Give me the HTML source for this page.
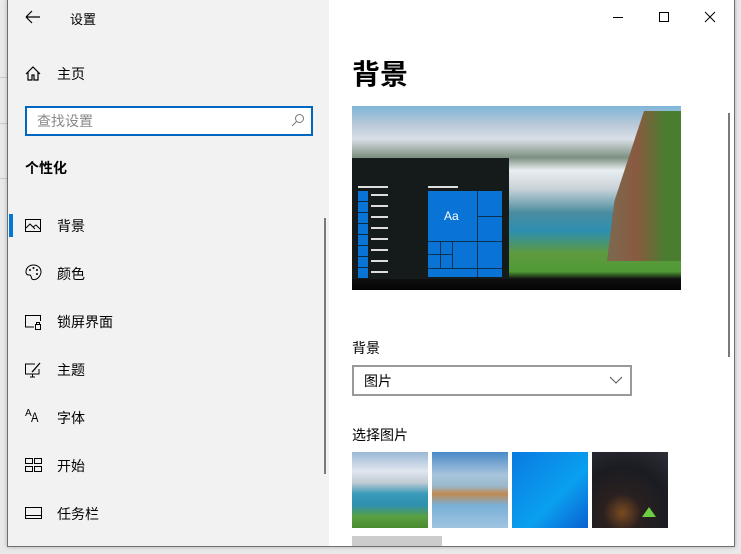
<!DOCTYPE html>
<html><head><meta charset="utf-8"><style>
*{margin:0;padding:0;box-sizing:border-box}
body{width:741px;height:554px;background:#e9e9e9;position:relative;overflow:hidden;font-family:"Liberation Sans","Noto Sans CJK SC",sans-serif;color:#000}
.win{position:absolute;left:7px;top:-1px;width:728px;height:548px;border:1px solid #6f6f6f;background:#fff;overflow:hidden;box-shadow:0 0 4px rgba(0,0,0,.25)}
.left{position:absolute;left:0;top:0;width:321px;height:548px;background:#f2f2f2}
.t{position:absolute;font-size:14px;white-space:nowrap}
.ic{position:absolute}
.img{position:absolute;overflow:hidden}
</style></head><body>
<div style="position:absolute;left:0;top:77px;width:7px;height:1px;background:#ccc"></div>
<div style="position:absolute;left:0;top:123px;width:7px;height:1px;background:#ccc"></div>
<div style="position:absolute;left:0;top:178px;width:7px;height:1px;background:#ccc"></div>
<div class="win">
<div class="left">
 <svg class="ic" style="left:17px;top:10px" width="16" height="14"><path d="M1 7H15M1 7L7 1M1 7L7 13" stroke="#000" fill="none" stroke-width="1.2"/></svg>
 <div class="t" style="left:62px;top:9px;font-size:13px">设置</div>
 <svg class="ic" style="left:17px;top:66px" width="16" height="15"><path d="M1 8L8 1L15 8M3 6V14H7V9H9V14H13V6" stroke="#000" fill="none" stroke-width="1.2"/></svg>
 <div class="t" style="left:49px;top:64px">主页</div>
 <div style="position:absolute;left:17px;top:106px;width:288px;height:30px;border:2px solid #0067c0;background:#fff"></div>
 <div class="t" style="left:29px;top:111px;color:#888">查找设置</div>
 <svg class="ic" style="left:283px;top:113px" width="14" height="14"><circle cx="8.5" cy="5.5" r="4" stroke="#777" fill="none"/><path d="M5.5 8.5L1 13" stroke="#777"/></svg>
 <div class="t" style="left:17px;top:158px;font-weight:bold">个性化</div>
 <div style="position:absolute;left:1px;top:214px;width:4px;height:23px;background:#0078d7"></div>
 <svg class="ic" style="left:17px;top:219px" width="16" height="13"><rect x=".5" y=".5" width="15" height="12" stroke="#000" fill="none"/><path d="M1 9L5 5L10 10M8 8L11 6L15 10" stroke="#000" fill="none"/></svg>
 <div class="t" style="left:49px;top:216px">背景</div>
 <svg class="ic" style="left:17px;top:264px" width="17" height="17"><path d="M8.5 1C4 1 1 4 1 8C1 11 3 11 5 11C6 11 6 13 7 15C8 16 11 16 13 14C15 12 16 10 16 8C16 4 13 1 8.5 1Z" stroke="#000" fill="none"/><circle cx="5" cy="6" r="1"/><circle cx="8.5" cy="4" r="1"/><circle cx="12" cy="6" r="1"/><circle cx="12" cy="10" r="1"/></svg>
 <div class="t" style="left:49px;top:264px">颜色</div>
 <svg class="ic" style="left:17px;top:315px" width="17" height="15"><path d="M9 12H.5V.5H15.5V6" stroke="#000" fill="none"/><rect x="10.5" y="9.5" width="5" height="5" stroke="#000" fill="none"/><path d="M11.5 9.5V7.5H14.5V9.5" stroke="#000" fill="none"/></svg>
 <div class="t" style="left:49px;top:312px">锁屏界面</div>
 <svg class="ic" style="left:17px;top:362px" width="17" height="16"><path d="M10 2H.5V12H14V7M5 15H10M7.5 12V15" stroke="#000" fill="none"/><path d="M15 1L8 9L7 10" stroke="#000" fill="none" stroke-width="1.3"/></svg>
 <div class="t" style="left:49px;top:360px">主题</div>
 <div class="t" style="left:17px;top:409px;font-size:10px;line-height:10px">A</div>
 <div class="t" style="left:23px;top:410px;font-size:14px;line-height:14px;transform:scaleX(.8);transform-origin:left">A</div>
 <div class="t" style="left:49px;top:408px">字体</div>
 <svg class="ic" style="left:17px;top:458px" width="17" height="14"><rect x=".5" y=".5" width="7" height="5" stroke="#000" fill="none"/><rect x="9.5" y=".5" width="7" height="5" stroke="#000" fill="none"/><rect x=".5" y="8.5" width="7" height="5" stroke="#000" fill="none"/><rect x="9.5" y="8.5" width="7" height="5" stroke="#000" fill="none"/></svg>
 <div class="t" style="left:49px;top:456px">开始</div>
 <svg class="ic" style="left:17px;top:507px" width="17" height="12"><rect x=".5" y=".5" width="16" height="11" stroke="#000" fill="none"/><path d="M1 8.5H16" stroke="#000"/></svg>
 <div class="t" style="left:49px;top:504px">任务栏</div>
 <div style="position:absolute;left:316px;top:218px;width:2px;height:256px;background:#7a7a7a"></div>
</div>
<div style="position:absolute;left:605px;top:17px;width:10px;height:1px;background:#000"></div>
<div style="position:absolute;left:651px;top:12px;width:10px;height:10px;border:1px solid #000"></div>
<svg class="ic" style="left:696px;top:11px" width="12" height="12"><path d="M1 1L11 11M11 1L1 11" stroke="#000"/></svg>
<div class="t" style="left:344px;top:53px;font-size:28px;font-weight:bold">背景</div>
<div class="img" style="left:344px;top:106px;width:329px;height:184px;background:linear-gradient(180deg,#7fb6d8 0%,#b8c8d8 10%,#d9dfe6 18%,#7c9080 28%,#e8eef2 35%,#c9d2d8 45%,#4a8ca0 58%,#2d8fb0 68%,#5e9a40 80%,#4f9a35 90%,#101010 94%,#050505 100%)">
 <div style="position:absolute;left:255px;top:5px;width:74px;height:150px;background:linear-gradient(90deg,#7a6a50,#8a5a40 40%,#4a7d30 80%);clip-path:polygon(50% 0,100% 0,100% 100%,0 100%,10% 60%,30% 30%)"></div>
 <div style="position:absolute;left:0;top:52px;width:157px;height:121px;background:#151a1a">
  <div style="position:absolute;left:6px;top:28px;width:30px;height:2px;background:#ddd"></div>
  <div style="position:absolute;left:76px;top:28px;width:30px;height:2px;background:#ddd"></div>
  <div style="position:absolute;left:6px;top:33px;width:10px;height:87px;background:repeating-linear-gradient(180deg,#0a74d6 0 10px,#0b2a44 10px 11px)"></div>
  <div style="position:absolute;left:19px;top:36px;width:17px;height:80px;background:repeating-linear-gradient(180deg,#ddd 0 2px,transparent 2px 11px)"></div>
  <div style="position:absolute;left:76px;top:33px;width:74px;height:86px;background:#0a74d6"></div>
  <div style="position:absolute;left:125px;top:33px;width:1px;height:86px;background:#08304f"></div>
  <div style="position:absolute;left:76px;top:83px;width:74px;height:1px;background:#08304f"></div>
  <div style="position:absolute;left:125px;top:58px;width:25px;height:1px;background:#08304f"></div>
  <div style="position:absolute;left:76px;top:110px;width:74px;height:1px;background:#08304f"></div>
  <div style="position:absolute;left:88px;top:83px;width:1px;height:27px;background:#08304f"></div>
  <div style="position:absolute;left:100px;top:83px;width:1px;height:27px;background:#08304f"></div>
  <div style="position:absolute;left:76px;top:96px;width:24px;height:1px;background:#08304f"></div>
  <div style="position:absolute;left:92px;top:51px;color:#fff;font-size:12px">Aa</div>
 </div>
</div>
<div style="position:absolute;left:720px;top:113px;width:2px;height:244px;background:#7a7a7a"></div>
<div class="t" style="left:344px;top:338px">背景</div>
<div style="position:absolute;left:344px;top:365px;width:280px;height:31px;border:2px solid #999;background:#fff"></div>
<div class="t" style="left:356px;top:371px">图片</div>
<svg class="ic" style="left:601px;top:376px" width="14" height="8"><path d="M1 1L7 7L13 1" stroke="#555" fill="none"/></svg>
<div class="t" style="left:344px;top:425px">选择图片</div>
<div class="img" style="left:344px;top:452px;width:76px;height:76px;background:linear-gradient(180deg,#9ab8d6 0%,#e0e6ee 25%,#c0ccd4 40%,#3a9ab8 55%,#2f90b0 70%,#5aa040 85%,#4a8a30 100%)"></div>
<div class="img" style="left:424px;top:452px;width:76px;height:76px;background:linear-gradient(180deg,#4a8ac8 0%,#a8c4dc 30%,#9ab8cc 45%,#c08a50 55%,#7ab0d8 70%,#a0c4e0 100%)"></div>
<div class="img" style="left:504px;top:452px;width:76px;height:76px;background:linear-gradient(135deg,#0a7ae0,#0aa0f0 60%,#0a60d0)"></div>
<div class="img" style="left:584px;top:452px;width:76px;height:76px;background:radial-gradient(circle at 40% 80%,#7a4a20 0,#2a2020 25%,#1a1c22 60%,#2e2e36 100%)"><div style="position:absolute;left:50px;top:55px;width:14px;height:10px;background:#6ad040;clip-path:polygon(50% 0,100% 100%,0 100%)"></div></div>
<div style="position:absolute;left:344px;top:536px;width:90px;height:12px;background:#ccc"></div>
</div>
</body></html>
